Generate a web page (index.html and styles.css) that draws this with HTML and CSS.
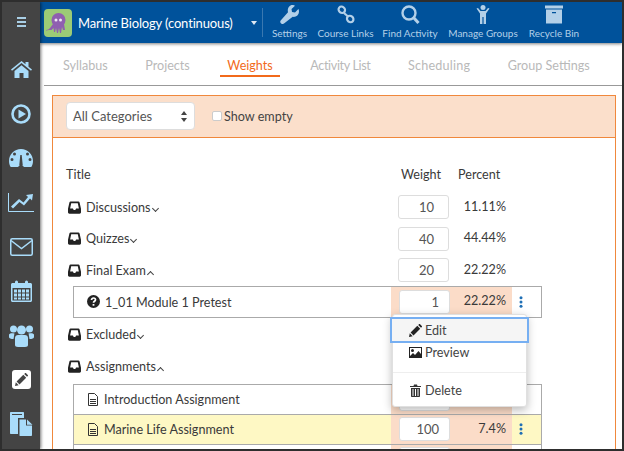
FILE: index.html
```html
<!DOCTYPE html>
<html lang="en">
<head>
<meta charset="utf-8">
<title>Weights</title>
<link rel="stylesheet" href="styles.css">
</head>
<body>
<svg class="defs" width="0" height="0" aria-hidden="true">
  <symbol id="tray" viewBox="0 0 13 13"><path fill="#222" fill-rule="evenodd" d="M2.6 0.5h7.8c.6 0 1 .3 1.2.9l1.4 6.3v3.6c0 .9-.6 1.4-1.4 1.4H1.4C.6 12.700 0 12.200 0 11.300V7.700l1.400-6.300C1.600.8 2 .5 2.600.5zM3.200 2.300 2.100 7.400h2.800l.8 1.500h1.600l.8-1.500h2.800L9.800 2.300z"/></symbol>
  <symbol id="doc" viewBox="0 0 12 13"><path fill="none" stroke="#333" d="M1.500.5h6l3 3v9h-9z"/><path fill="none" stroke="#333" d="M3 6.500h6M3 8.500h6M3 10.500h6"/></symbol>
  <symbol id="dots" viewBox="0 0 4 12"><circle cx="2" cy="1.700" r="1.500"/><circle cx="2" cy="6" r="1.500"/><circle cx="2" cy="10.300" r="1.500"/></symbol>
</svg>
<div class="frame">
  <nav class="sidebar">
    <div class="burger"><span></span><span></span><span></span></div>
    <div class="side-item"><svg width="21" height="17" viewBox="0 0 21 17"><path fill="#a9dcfa" d="M10.500 0 0 8.500l1 1.200L10.500 2 20 9.700l1-1.200-3.500-2.800V1h-3v2.200zM3.500 10l7-5.700 7 5.700v7h-5v-5h-4v5h-5z"/></svg></div>
    <div class="side-item"><svg width="20" height="20" viewBox="0 0 20 20"><circle cx="10" cy="10" r="8.500" fill="none" stroke="#a9dcfa" stroke-width="2.600"/><path fill="#a9dcfa" d="M7.500 5.500 15 10l-7.500 4.500z"/></svg></div>
    <div class="side-item"><svg width="24" height="18" viewBox="0 0 24 18"><path fill="#a9dcfa" fill-rule="evenodd" d="M12 0C5.400 0 0 5.300 0 12c0 2.300.6 4.300 1.700 6h7.100l1.700-1.200-.2-1 1-9.800h1.400l1 9.800-.2 1 1.700 1.200h7.100c1.100-1.700 1.700-3.700 1.700-6 0-6.700-5.400-12-12-12zM5.500 3.500a1.500 1.500 0 1 1 0 3 1.500 1.500 0 0 1 0-3zm13 0a1.500 1.500 0 1 1 0 3 1.500 1.500 0 0 1 0-3zM3 9a1.500 1.500 0 1 1 0 3 1.500 1.500 0 0 1 0-3zm18 0a1.500 1.500 0 1 1 0 3 1.500 1.500 0 0 1 0-3z"/></svg></div>
    <div class="side-item"><svg width="26" height="19" viewBox="0 0 26 19"><path fill="none" stroke="#a9dcfa" d="M.5 0v18.500H26"/><path fill="#a9dcfa" d="M25 1l-1 6.500-2-2-6 7-4.500-3.500L5 15.500l-2-2 8-7.500 4.500 3.500 4.500-5.500-2-2z"/></svg></div>
    <div class="side-item"><svg width="23" height="18" viewBox="0 0 23 18"><rect x=".75" y=".75" width="21.500" height="16.500" rx="1.500" fill="none" stroke="#a9dcfa" stroke-width="1.500"/><path fill="none" stroke="#a9dcfa" stroke-width="1.500" d="M1 2.500l10.500 8 10.500-8"/></svg></div>
    <div class="side-item"><svg width="21" height="22" viewBox="0 0 21 22"><path fill="#a9dcfa" fill-rule="evenodd" d="M1.500 3H4V2a1.500 1.500 0 0 1 3 0v1h7V2a1.500 1.500 0 0 1 3 0v1h2.500C20.300 3 21 3.700 21 4.500v16c0 .8-.7 1.500-1.500 1.500h-18C.7 22 0 21.300 0 20.500v-16C0 3.700.7 3 1.500 3zM1.500 8v12.500h18V8zM3 9.500h3v3H3zm0 4h3v3H3zm0 4h3v2H3zm4-8h3v3H7zm0 4h3v3H7zm0 4h3v2H7zm4-8h3v3h-3zm0 4h3v3h-3zm0 4h3v2h-3zm4-8h3v3h-3zm0 4h3v3h-3zm0 4h3v2h-3z"/></svg></div>
    <div class="side-item"><svg width="25" height="22" viewBox="0 0 25 22"><g fill="#a9dcfa"><circle cx="4.500" cy="4" r="3.500"/><circle cx="20.500" cy="4" r="3.500"/><circle cx="12.500" cy="5" r="4.500"/><path d="M0 9.500C1 8 3 8 5.500 8.500 5 10 5 12 4.500 14 2 14 0 13.500 0 12zM25 9.500C24 8 22 8 19.500 8.500 20 10 20 12 20.500 14 23 14 25 13.500 25 12z"/><path d="M6 13c0-2 1.500-3 3-3h7c1.500 0 3 1 3 3v7c0 1-1 2-3 2H9c-2 0-3-1-3-2z"/></g></svg></div>
    <div class="side-item"><span class="side-active"><svg width="13" height="13" viewBox="0 0 13 13"><path fill="#444" d="M0 13l.8-3.700 2.900 2.900zM1.600 8.500 8.300 1.800l2.900 2.900-6.700 6.700zM9.200 1l.8-.8c.3-.3.800-.3 1.100 0l1.700 1.700c.3.300.3.800 0 1.100l-.8.8z"/></svg></span></div>
    <div class="side-item"><svg width="23" height="24" viewBox="0 0 23 24"><path fill="#a9dcfa" d="M1 0h12c.6 0 1 .4 1 1v5H8v16H1c-.6 0-1-.4-1-1V1c0-.6.4-1 1-1z"/><path fill="#a9dcfa" d="M9.500 7.500H16v6h6V23c0 .6-.4 1-1 1H10c-.3 0-.5-.2-.5-.5zM17 7.500l5.500 5.200H17z"/><path fill="#444" d="M2 2h10v1H2z"/></svg></div>
  </nav>
  <div class="main">
    <header class="topbar">
      <svg class="logo" width="28" height="28" viewBox="0 0 28 28"><rect width="28" height="28" rx="4" fill="#9ccb76"/><g fill="#8f5fb0"><ellipse cx="14.500" cy="11" rx="7" ry="7"/><path d="M9 15h11l1 6-2 0-1-3-1 6h-1l-1-5-1 5h-1l-1-5-1 4-1 0-.5-4-2 2H5l-3 .5V21c2 0 3-1 4-2z"/></g><circle cx="12" cy="11" r="1.500" fill="#efe8f5"/><circle cx="16.500" cy="11" r="1.500" fill="#efe8f5"/></svg>
      <span class="course">Marine Biology (continuous)</span>
      <span class="caret"></span>
      <span class="vline"></span>
      <div class="tools">
        <div class="tool tool-settings"><svg width="19" height="19" viewBox="0 0 19 19"><path fill="#b3d0e8" d="M12.500 0c1 0 2 .3 2.500.7L11.500 4l.5 3 3 .5L18.400 4c.4.600.6 1.500.6 2.400 0 3.400-3 6-6.300 5.400L4 18.500c-1 .800-2.300.700-3.100-.2-.9-.9-.9-2.300 0-3.100l7.100-8C7.100 3.700 9 0 12.500 0z"/></svg><span>Settings</span></div>
        <div class="tool tool-links"><svg width="18" height="19" viewBox="0 0 18 19"><g fill="none" stroke="#b3d0e8" stroke-width="2.200"><ellipse cx="4.800" cy="4.800" rx="3.400" ry="3" transform="rotate(40 4.800 4.800)"/><ellipse cx="13.200" cy="14" rx="3.400" ry="3" transform="rotate(40 13.200 14)"/><path d="M7 8l4 3.500"/></g></svg><span>Course Links</span></div>
        <div class="tool tool-find"><svg width="19" height="19" viewBox="0 0 19 19"><circle cx="8" cy="8" r="6.500" fill="none" stroke="#b3d0e8" stroke-width="2.400"/><path stroke="#b3d0e8" stroke-width="3" d="M12.500 12.500l5 5.500"/></svg><span>Find Activity</span></div>
        <div class="tool tool-groups"><svg width="14" height="19" viewBox="0 0 14 19"><circle cx="7" cy="2.500" r="2.500" fill="#b3d0e8"/><path fill="#b3d0e8" d="M.5 3.500 2 3l2.500 3h5L12 3l1.500.5-3.500 5V19H7.600v-7H6.400v7H4V8.500z"/></svg><span>Manage Groups</span></div>
        <div class="tool tool-bin"><svg width="18" height="18" viewBox="0 0 18 18"><path fill="#b3d0e8" d="M0 0h18v3H0zM1 4h16v14H1zm6 2.500v1.300h4V6.500z"/></svg><span>Recycle Bin</span></div>
      </div>
    </header>
    <div class="tabs">
      <span class="tab">Syllabus</span>
      <span class="tab">Projects</span>
      <span class="tab tab-active">Weights</span>
      <span class="tab tab-activity">Activity List</span>
      <span class="tab tab-sched">Scheduling</span>
      <span class="tab">Group Settings</span>
    </div>
    <section class="panel">
      <div class="filter">
        <div class="select"><span>All Categories</span><span class="updown"></span></div>
        <label class="check"><span class="box"></span>Show empty</label>
      </div>
      <div class="body">
        <div class="heads"><span class="h-title">Title</span><span class="h-weight">Weight</span><span class="h-percent">Percent</span></div>
        <div class="cat"><svg class="cat-ico" width="13" height="13"><use href="#tray"/></svg><span class="cat-name">Discussions<i class="chev down"></i></span><span class="input">10</span><span class="pct">11.11%</span></div>
        <div class="cat"><svg class="cat-ico" width="13" height="13"><use href="#tray"/></svg><span class="cat-name">Quizzes<i class="chev down"></i></span><span class="input">40</span><span class="pct">44.44%</span></div>
        <div class="cat"><svg class="cat-ico" width="13" height="13"><use href="#tray"/></svg><span class="cat-name">Final Exam<i class="chev up"></i></span><span class="input">20</span><span class="pct">22.22%</span></div>
        <div class="items items-one">
          <div class="item"><svg class="item-ico" width="13" height="13" viewBox="0 0 13 13"><circle cx="6.500" cy="6.500" r="6.500" fill="#222"/><path fill="none" stroke="#fff" stroke-width="1.700" d="M4.500 5c0-1.300 1-2 2-2s2 .7 2 1.800c0 1.500-2 1.500-2 3"/><rect x="5.600" y="9" width="1.800" height="1.700" fill="#fff"/></svg><span class="item-name">1_01 Module 1 Pretest</span><div class="cells"><span class="input">1</span><span class="pct">22.22%</span></div><svg class="dots" width="4" height="12"><use href="#dots"/></svg></div>
        </div>
        <div class="cat cat-ex"><svg class="cat-ico" width="13" height="13"><use href="#tray"/></svg><span class="cat-name">Excluded<i class="chev down"></i></span><span class="input"></span><span class="pct"></span></div>
        <div class="cat cat-as"><svg class="cat-ico" width="13" height="13"><use href="#tray"/></svg><span class="cat-name">Assignments<i class="chev up"></i></span><span class="input"></span><span class="pct"></span></div>
        <div class="items">
          <div class="item"><svg class="item-ico" width="12" height="13"><use href="#doc"/></svg><span class="item-name item-name-doc">Introduction Assignment</span><div class="cells"><span class="input"></span><span class="pct"></span></div></div>
          <div class="item item-hl"><svg class="item-ico" width="12" height="13"><use href="#doc"/></svg><span class="item-name item-name-doc">Marine Life Assignment</span><div class="cells"><span class="input">100</span><span class="pct">7.4%</span></div><svg class="dots" width="4" height="12"><use href="#dots"/></svg></div>
          <div class="item"><span class="item-ico-blank"></span><span class="item-name item-name-doc"></span><div class="cells"><span class="input"></span><span class="pct"></span></div></div>
        </div>
      </div>
    </section>
    <div class="menu">
      <div class="menu-item menu-focus"><svg width="13" height="13" viewBox="0 0 13 13"><path fill="#222" d="M0 13l.8-3.700 2.900 2.900zM1.600 8.500 8.300 1.800l2.900 2.900-6.700 6.700zM9.200 1l.8-.8c.3-.3.800-.3 1.100 0l1.700 1.700c.3.300.3.800 0 1.100l-.8.8z"/></svg>Edit</div>
      <div class="menu-item menu-preview"><svg width="13" height="11" viewBox="0 0 13 11"><path fill="#222" fill-rule="evenodd" d="M0 0h13v11H0zM1 1v8l3-3 2 2 3.500-4L12 7V1zM3.500 2a1.500 1.500 0 1 1 0 3 1.500 1.500 0 0 1 0-3z"/></svg>Preview</div>
      <div class="menu-sep"></div>
      <div class="menu-item menu-delete"><svg width="11" height="13" viewBox="0 0 11 13"><path fill="#333" d="M0 2h3.500l.5-1.500h3L7.500 2H11v1H0zM1 4h9v8c0 .6-.4 1-1 1H2c-.6 0-1-.4-1-1zm1.500 1v7h1V5zm2.500 0v7h1V5zm2.500 0v7h1V5z"/></svg>Delete</div>
    </div>
  </div>
</div>
</body>
</html>
```
FILE: styles.css
```css
* { box-sizing: border-box; }
html, body { margin: 0; padding: 0; }
body { width: 624px; height: 451px; overflow: hidden; background: #2e2e2e; font-family: Lato, "Liberation Sans", sans-serif; color: #3a3a3a; }
.defs { position: absolute; }
.frame { width: 620px; height: 447px; margin: 2px 2px 2px 2px; display: flex; overflow: hidden; background: #fff; }

.sidebar { width: 38px; flex: none; background: #444; box-shadow: 1px 0 3px rgba(0,0,0,.55); position: relative; z-index: 2; display: flex; flex-direction: column; }
.burger { height: 45px; padding-top: 15px; display: flex; flex-direction: column; gap: 2px; align-items: center; }
.burger span { width: 9px; height: 2px; background: #a9cfe6; }
.side-item { height: 44.4px; flex: none; display: flex; align-items: center; justify-content: center; }
.side-active { width: 19px; height: 19px; border-radius: 3px; background: #fff; display: flex; align-items: center; justify-content: center; }

.main { flex: 1; min-width: 0; position: relative; }
.topbar { height: 41px; background: #00529b; box-shadow: 0 1px 3px rgba(0,0,0,.5); display: flex; align-items: center; padding-left: 4px; position: relative; z-index: 1; }
.logo { flex: none; }
.course { margin-left: 6px; width: 170px; font-size: 13px; letter-spacing: -.15px; color: #fff; white-space: nowrap; }
.caret { width: 0; height: 0; border: 3.500px solid transparent; border-top: 4px solid #dfe9f3; border-bottom: 0; margin-left: 3px; }
.vline { width: 1px; height: 29px; margin-left: 5px; background: #3a78b0; }
.tools { display: flex; height: 41px; }
.tool { display: flex; flex-direction: column; align-items: center; padding-top: 3px; font-size: 10px; color: #b3d0e8; white-space: nowrap; }
.tool svg { height: 19px; flex: none; margin-bottom: 3px; }
.tool-settings { width: 53px; }
.tool-links { width: 59px; }
.tool-find { width: 70px; }
.tool-groups { width: 76px; }
.tool-bin { width: 66px; }

.tabs { height: 43px; margin-left: 4px; border-bottom: 1px solid #999; display: flex; align-items: flex-start; gap: 23.500px; padding: 14px 0 0 12px; font-size: 12.600px; }
.tab { padding: 0 7px 3px; line-height: 17px; color: #b9b9b9; white-space: nowrap; }
.tab-active { color: #f26a1b; border-bottom: 2px solid #f26a1b; padding-bottom: 1px; }
.tab-activity { letter-spacing: -.35px; }
.tab-sched { letter-spacing: .2px; }

.panel { margin: 9px 6px 0 12px; border: 1px solid #f0883c; border-bottom: 0; }
.filter { height: 42px; background: #fbdfcb; border-bottom: 1px solid #f0883c; display: flex; align-items: center; padding: 0 13px 1px; }
.select { width: 129px; height: 28px; background: #fff; border: 1px solid #ddd; border-radius: 4px; display: flex; align-items: center; justify-content: space-between; padding: 0 6px; font-size: 13px; color: #555; }
.updown { display: block; width: 7px; height: 11px; position: relative; }
.updown::before, .updown::after { content: ""; position: absolute; left: 0; width: 0; height: 0; border-left: 3.500px solid transparent; border-right: 3.500px solid transparent; }
.updown::before { top: 0; border-bottom: 4.500px solid #444; }
.updown::after { bottom: 0; border-top: 4.500px solid #444; }
.check { display: flex; align-items: center; margin-left: 17px; font-size: 12.600px; color: #444; }
.box { flex: none; width: 10px; height: 10px; margin-right: 2px; border: 1px solid #ccc; border-radius: 2px; background: #fff; }

.body { padding: 25px 0 0; font-size: 12.600px; }
.heads { display: flex; height: 22px; align-items: center; padding-left: 13px; margin-bottom: 10px; }
.h-title { width: 335px; }
.h-weight { width: 57px; }
.h-percent { width: 60px; }
.cat { display: flex; align-items: center; height: 24px; padding-left: 15px; margin-bottom: 7.500px; }
.cat-ico { flex: none; }
.cat-name { width: 317px; padding-left: 5px; white-space: nowrap; }
.chev { display: inline-block; width: 5px; height: 5px; border-right: 1px solid #444; border-bottom: 1px solid #444; margin-left: 2px; }
.chev.down { transform: rotate(45deg); position: relative; top: -1px; }
.chev.up { transform: rotate(-135deg); position: relative; top: 2px; }
.input { flex: none; width: 51px; height: 24px; background: #fff; border: 1px solid #ddd; border-radius: 3px; display: flex; align-items: center; justify-content: flex-end; padding-right: 14px; font-size: 13px; color: #555; }
.pct { flex: none; width: 57px; text-align: right; white-space: nowrap; position: relative; top: -1px; }
.cat-ex { margin-top: 5px; margin-bottom: 8px; }
.cat-as { margin-bottom: 5px; }
.items { margin-left: 20px; width: 469px; border: 1px solid #aaa; border-bottom: 0; }
.items-one { border-bottom: 1px solid #aaa; height: 32px; margin-top: -4px; }
.item { display: flex; align-items: center; height: 30px; padding-left: 13px; border-bottom: 1px solid #aaa; }
.items-one .item { border-bottom: 0; }
.item-hl { background: #fef8c4; }
.item-ico { flex: none; }
.item-ico-blank { flex: none; width: 12px; }
.item-name { flex: none; width: 291px; padding-left: 5px; white-space: nowrap; position: relative; top: 1px; }
.item-name-doc { width: 292px; top: 0; }
.item .input { padding-right: 10px; }
.cells { flex: none; width: 121px; height: 100%; background: #fbdcc8; display: flex; align-items: center; padding-left: 8px; }
.cells .pct { width: 56px; }
.dots { flex: none; margin-left: 7px; fill: #1f6fb5; }

.menu { position: absolute; left: 352px; top: 312px; width: 135px; height: 93px; background: #fff; border: 1px solid #e0e0e0; border-radius: 3px; box-shadow: 0 3px 10px rgba(0,0,0,.28); padding-top: 4px; z-index: 3; font-size: 12.600px; color: #444; }
.menu-item { display: flex; align-items: center; gap: 3px; height: 22px; padding-left: 16px; }
.menu-focus { background: #f5f5f5; box-shadow: 0 0 0 2px #76aff2; margin: 0 -1px; padding-left: 17px; }
.menu-sep { height: 1px; background: #eee; margin-top: 9px; }
.menu-delete { margin-top: 6px; padding-left: 17px; gap: 4px; }
```
